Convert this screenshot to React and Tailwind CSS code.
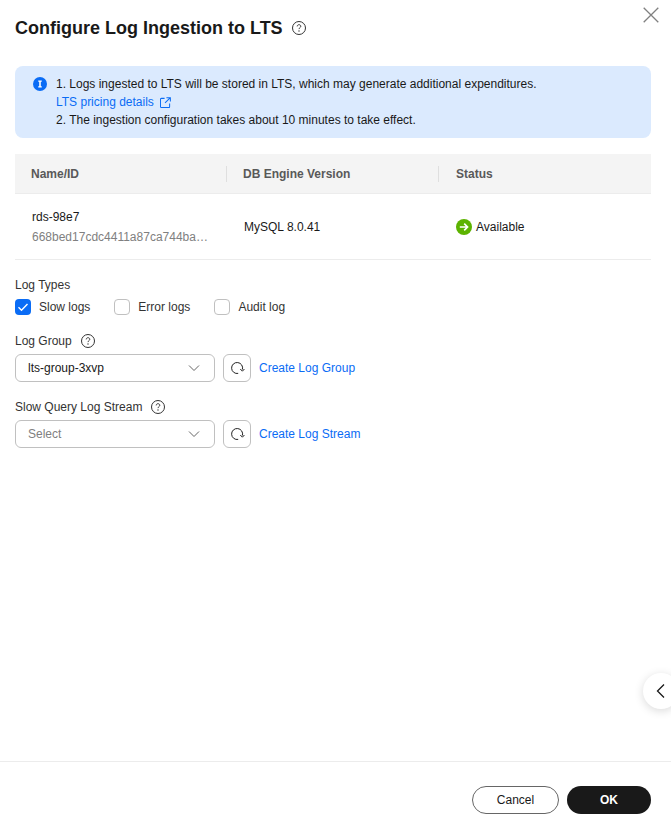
import React from 'react';

const HelpIcon = ({ className }) => (
    <svg viewBox="0 0 16 16" fill="none" className={className}>
        <circle cx="8" cy="8" r="6.5" stroke="currentColor" strokeWidth="1" />
        <path d="M6.2 6.4c0-1 .8-1.7 1.8-1.7s1.8.7 1.8 1.6c0 1.3-1.8 1.4-1.8 2.8" stroke="currentColor" strokeWidth="1" />
        <circle cx="8" cy="11" r=".7" fill="currentColor" />
    </svg>
);

const Chevron = () => (
    <svg viewBox="0 0 12 8" fill="none" className="w-[12px] h-[8px] text-[#666]">
        <path d="M1 1.5l5 5 5-5" stroke="currentColor" strokeWidth="1" />
    </svg>
);

const RefreshButton = () => (
    <button className="w-[28px] h-[28px] flex items-center justify-center border border-[#c0c0c0] rounded-[6px] bg-white shrink-0">
        <svg viewBox="0 0 16 16" fill="none" className="w-[16px] h-[16px] text-[#222]">
            <path d="M9.2 13.4A5.5 5.5 0 1 1 13.4 9.5" stroke="currentColor" strokeWidth="1" />
            <path d="M11.3 9l2.1 2.2 2-2.2" stroke="currentColor" strokeWidth="1" />
        </svg>
    </button>
);

const Checkbox = ({ checked, label }) => (
    <label className="flex items-center gap-[8px]">
        {checked ? (
            <span className="w-[16px] h-[16px] rounded-[4px] bg-[#0a6cf5] flex items-center justify-center">
                <svg viewBox="0 0 16 16" fill="none" className="w-[16px] h-[16px]">
                    <path d="M3.5 8.2l3 3 6-6.2" stroke="white" strokeWidth="1.4" />
                </svg>
            </span>
        ) : (
            <span className="w-[16px] h-[16px] rounded-[4px] border border-[#c0c0c0] bg-white" />
        )}
        <span className="text-[12px] text-[#333]">{label}</span>
    </label>
);

const SelectBox = ({ value, placeholder }) => (
    <div className="w-[200px] h-[28px] flex items-center justify-between pl-[12px] pr-[14px] border border-[#c0c0c0] rounded-[6px] bg-white">
        <span className={placeholder ? 'text-[12px] text-[#808080]' : 'text-[12px] text-[#191919]'}>{value}</span>
        <Chevron />
    </div>
);

const App = () => {
    return (
        <div className="relative w-[671px] h-[824px] bg-white overflow-hidden flex flex-col font-['Liberation_Sans',Arial,sans-serif]">
            <button className="absolute left-[643px] top-[7px] text-[#808080]">
                <svg viewBox="0 0 16 16" fill="none" className="w-[16px] h-[16px]">
                    <path d="M.7.7l14.6 14.6M15.3.7L.7 15.3" stroke="currentColor" strokeWidth="1.3" />
                </svg>
            </button>

            <div className="flex-1 px-[15px] pr-[20px]">
                <div className="flex items-center h-[24px] mt-[16px]">
                    <h1 className="text-[18px] font-bold text-[#191919]">Configure Log Ingestion to LTS</h1>
                    <HelpIcon className="w-[16px] h-[16px] ml-[8px] text-[#333]" />
                </div>

                <div className="mt-[26px] h-[72px] rounded-[8px] bg-[#dbeafe] flex pl-[18px] pt-[9px] gap-[9px]">
                    <svg viewBox="0 0 16 16" className="w-[14px] h-[14px] mt-[2px] shrink-0">
                        <circle cx="8" cy="8" r="8" fill="#0a6cf5" />
                        <path d="M6 4h4v1.3H8.9v5.4H10V12H6v-1.3h1.1V5.3H6z" fill="white" />
                    </svg>
                    <div className="text-[12px] leading-[18px] text-[#191919]">
                        <p>1. Logs ingested to LTS will be stored in LTS, which may generate additional expenditures.</p>
                        <p className="flex items-center gap-[6px] text-[#0a6cf5]">
                            LTS pricing details
                            <svg viewBox="0 0 12 12" fill="none" className="w-[11px] h-[11px]">
                                <path d="M5 1.5H1.5a1 1 0 0 0-1 1v8a1 1 0 0 0 1 1h8a1 1 0 0 0 1-1V7M7 .7h4.3V5M11.3.7L5.5 6.5" stroke="currentColor" strokeWidth="1.1" />
                            </svg>
                        </p>
                        <p>2. The ingestion configuration takes about 10 minutes to take effect.</p>
                    </div>
                </div>

                <div className="mt-[16px]">
                    <div className="h-[40px] bg-[#f4f4f4] border-b border-[#ececec] grid grid-cols-[212px_212px_1fr] items-center text-[12px] font-bold text-[#595959]">
                        <div className="pl-[16px] border-r border-[#dfdfdf] leading-[16px]">Name/ID</div>
                        <div className="pl-[16px] border-r border-[#dfdfdf] leading-[16px]">DB Engine Version</div>
                        <div className="pl-[17px] leading-[16px]">Status</div>
                    </div>
                    <div className="h-[66px] border-b border-[#ececec] grid grid-cols-[212px_212px_1fr] items-center text-[12px] text-[#191919]">
                        <div className="pl-[17px]">
                            <p className="leading-[20px]">rds-98e7</p>
                            <p className="leading-[20px] text-[#808080] whitespace-nowrap">668bed17cdc4411a87ca744ba…</p>
                        </div>
                        <div className="pl-[17px]">MySQL 8.0.41</div>
                        <div className="pl-[17px] flex items-center gap-[4px]">
                            <svg viewBox="0 0 16 16" fill="none" className="w-[16px] h-[16px]">
                                <circle cx="8" cy="8" r="8" fill="#5cb300" />
                                <path d="M3.8 8h7.6M8.2 4.6L11.6 8l-3.4 3.4" stroke="white" strokeWidth="1.6" />
                            </svg>
                            Available
                        </div>
                    </div>
                </div>

                <p className="mt-[17px] text-[12px] leading-[16px] text-[#333]">Log Types</p>
                <div className="mt-[5px] flex items-center gap-[24px]">
                    <Checkbox checked label="Slow logs" />
                    <Checkbox label="Error logs" />
                    <Checkbox label="Audit log" />
                </div>

                <div className="mt-[17px] flex items-center gap-[8px] h-[16px] text-[12px] text-[#333]">
                    Log Group
                    <HelpIcon className="w-[16px] h-[16px]" />
                </div>
                <div className="mt-[5px] flex items-center gap-[8px]">
                    <SelectBox value="lts-group-3xvp" />
                    <RefreshButton />
                    <a className="text-[12px] text-[#0a6cf5]">Create Log Group</a>
                </div>

                <div className="mt-[17px] flex items-center gap-[8px] h-[16px] text-[12px] text-[#333]">
                    Slow Query Log Stream
                    <HelpIcon className="w-[16px] h-[16px]" />
                </div>
                <div className="mt-[5px] flex items-center gap-[8px]">
                    <SelectBox value="Select" placeholder />
                    <RefreshButton />
                    <a className="text-[12px] text-[#0a6cf5]">Create Log Stream</a>
                </div>
            </div>

            <div className="absolute left-[643px] top-[673px] w-[36px] h-[36px] rounded-full bg-white shadow-[0_2px_10px_rgba(0,0,0,0.15)] flex items-center pl-[13px]">
                <svg viewBox="0 0 10 16" fill="none" className="w-[10px] h-[16px] text-[#191919]">
                    <path d="M8 1.5L1.5 8 8 14.5" stroke="currentColor" strokeWidth="1.3" />
                </svg>
            </div>

            <div className="h-[63px] border-t border-[#ececec] flex items-start justify-end gap-[8px] pt-[24px] pr-[20px]">
                <button className="w-[87px] h-[28px] rounded-full border border-[#666] bg-white text-[12px] text-[#191919]">Cancel</button>
                <button className="w-[84px] h-[28px] rounded-full bg-[#191919] text-[12px] font-bold text-white">OK</button>
            </div>
        </div>
    );
};

export default App;
